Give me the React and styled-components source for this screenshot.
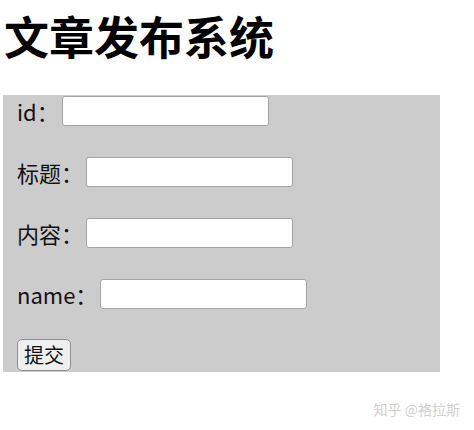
import React from "react";
import styled, { createGlobalStyle } from "styled-components";

const Global = createGlobalStyle`
  html, body { margin: 0; padding: 0; background: #fff; }
  body { font-family: "Noto Sans CJK SC", "Noto Sans", sans-serif; color: #000; }
`;

const Page = styled.div`
  width: 474px;
  height: 430px;
  padding-left: 3px;
  box-sizing: border-box;
  overflow: hidden;
`;

const Title = styled.h1`
  margin: 6px 0 29px 1px;
  font-size: 45px;
  line-height: 60px;
  font-weight: 700;
  letter-spacing: 0;
  font-family: "Noto Sans CJK SC", sans-serif;
`;

const FormBox = styled.form`
  width: 437px;
  background: #cccccc;
  padding: 1px 0 1px 14px;
  box-sizing: border-box;
  display: flex;
  flex-direction: column;
  align-items: flex-start;
`;

const Row = styled.div`
  display: flex;
  align-items: center;
  height: 30px;
  gap: 3px;
  margin-bottom: ${(p) => (p.$last ? 30 : 31)}px;
`;

const Label = styled.label`
  font-size: 22px;
  line-height: 30px;
  color: #111;
  white-space: nowrap;
`;

const Input = styled.input`
  width: 207px;
  height: 30px;
  box-sizing: border-box;
  border: 1px solid #a3a3a3;
  border-radius: 3px;
  background: #fff;
  padding: 0 4px;
  outline: none;
`;

const Submit = styled.button`
  width: 54px;
  height: 32px;
  box-sizing: border-box;
  font-family: "Noto Sans CJK SC", sans-serif;
  font-size: 20px;
  line-height: 1;
  padding: 0;
  color: #111;
  background: #efefef;
  border: 1px solid #8f8f8f;
  border-radius: 5px;
`;

const Watermark = styled.div`
  margin-top: 27px;
  padding-right: 14px;
  text-align: right;
  font-size: 14px;
  line-height: 20px;
  color: #cfcfcf;
`;

const fields = [
  { id: "id", label: "id：" },
  { id: "title", label: "标题：" },
  { id: "content", label: "内容：" },
  { id: "name", label: "name：", last: true },
];

export default function App() {
  return (
    <>
      <Global />
      <Page>
        <Title>文章发布系统</Title>
        <FormBox onSubmit={(e) => e.preventDefault()}>
          {fields.map((f) => (
            <Row key={f.id} $last={f.last}>
              <Label htmlFor={f.id}>{f.label}</Label>
              <Input id={f.id} type="text" />
            </Row>
          ))}
          <Submit type="submit">提交</Submit>
        </FormBox>
        <Watermark>知乎 @袼拉斯</Watermark>
      </Page>
    </>
  );
}
